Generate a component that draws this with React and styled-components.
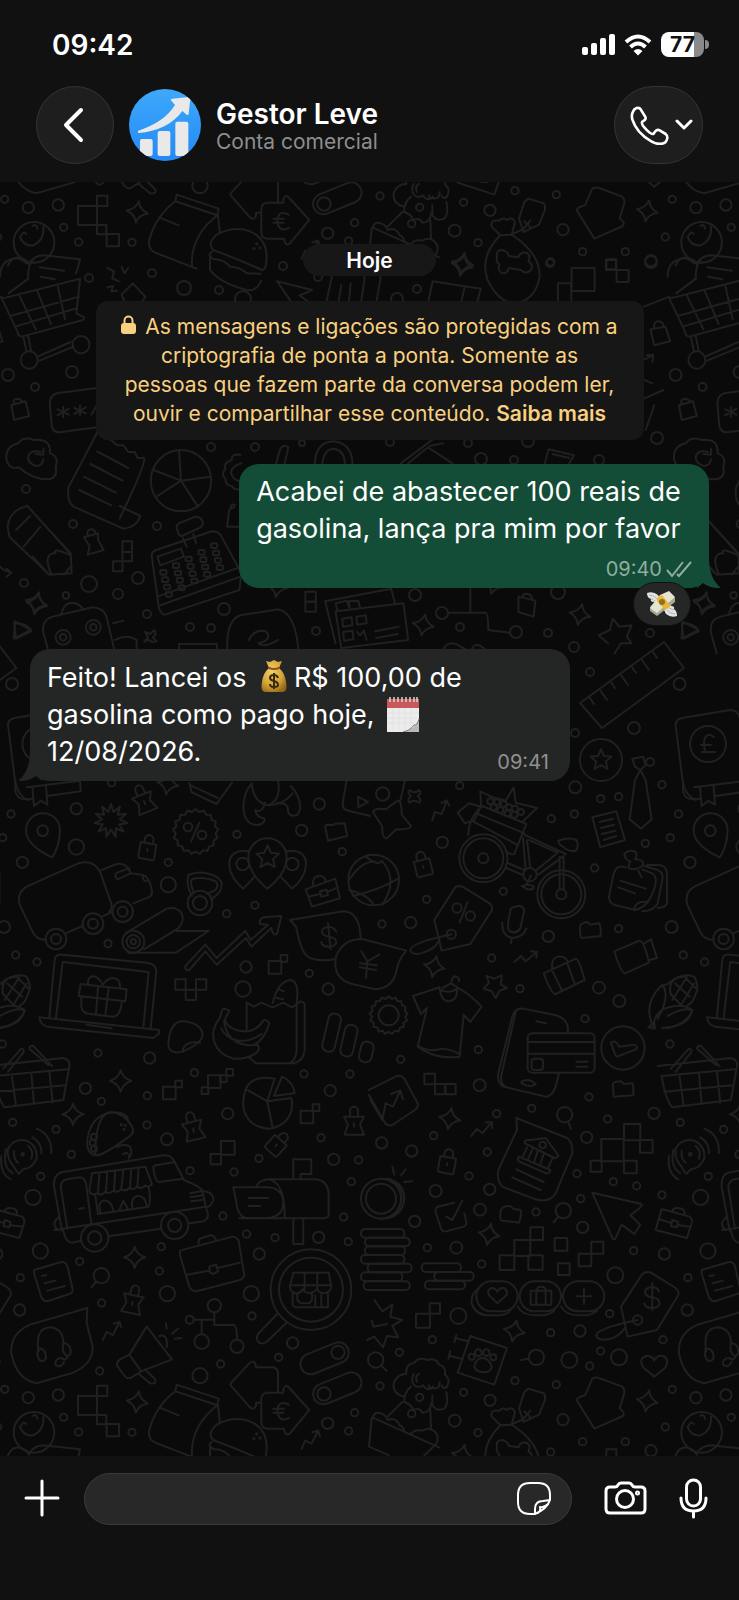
import React from "react";
import styled, { createGlobalStyle } from "styled-components";

const GlobalStyle = createGlobalStyle`
  * {
    box-sizing: border-box;
  }
  body {
    margin: 0;
    background: #0a0a0a;
    color: #fff;
    font-family: Inter, "Liberation Sans", sans-serif;
  }
  button {
    padding: 0;
    border: 0;
    background: none;
    color: inherit;
    font: inherit;
    cursor: pointer;
  }
`;

const Screen = styled.div`
  display: flex;
  flex-direction: column;
  min-height: 100vh;
  overflow: hidden;
`;

const Header = styled.header`
  background: #111;
  padding: 0 36px 18px;
`;

const StatusBar = styled.div`
  display: flex;
  align-items: center;
  justify-content: space-between;
  height: 86px;
  padding: 3px 0 0 16px;
`;

const Clock = styled.time`
  font-size: 28px;
  font-weight: 600;
`;

const StatusIcons = styled.div`
  display: flex;
  align-items: center;
  gap: 9px;
  margin-right: -6px;
`;

const Battery = styled.div`
  display: flex;
  align-items: center;
  gap: 1px;
  &::after {
    content: "";
    width: 4px;
    height: 9px;
    border-radius: 0 5px 5px 0;
    background: #8a8a8a;
  }
`;

const BatteryLevel = styled.span`
  width: 43px;
  height: 25px;
  border-radius: 8px;
  background: linear-gradient(90deg, #fff 77%, #8a8a8a 77%);
  color: #111;
  font-size: 21px;
  font-weight: 700;
  line-height: 25px;
  text-align: center;
`;

const ContactBar = styled.div`
  display: flex;
  align-items: center;
`;

const RoundButton = styled.button`
  display: flex;
  align-items: center;
  justify-content: center;
  gap: 6px;
  width: ${props => (props.$wide ? "89px" : "78px")};
  height: 78px;
  padding-left: ${props => (props.$wide ? "5px" : "0")};
  border: 1px solid #343434;
  border-radius: 39px;
  background: #1e1e1e;
`;

const Avatar = styled.svg`
  width: 72px;
  height: 72px;
  margin-left: 15px;
`;

const Contact = styled.div`
  flex: 1;
  margin-left: 15px;
  padding-top: 3px;
`;

const ContactName = styled.h1`
  margin: 0;
  font-size: 28px;
  font-weight: 600;
  line-height: 30px;
`;

const ContactKind = styled.p`
  margin: 0;
  color: #8e8e8e;
  font-size: 21px;
  line-height: 26px;
`;

const Chat = styled.main`
  position: relative;
  flex: 1;
  display: flex;
  flex-direction: column;
  align-items: center;
  padding: 62px 30px 0;
  background: #0a0a0a;
`;

const Wallpaper = styled.svg`
  position: absolute;
  inset: 0;
  width: 100%;
  height: 100%;
  fill: none;
  stroke: #202020;
  stroke-width: 2;
  stroke-linejoin: round;
  stroke-linecap: round;
  path,
  circle,
  rect,
  ellipse {
    vector-effect: non-scaling-stroke;
  }
`;

const DayLabel = styled.span`
  position: relative;
  padding: 1px 43px 0;
  border-radius: 16px;
  background: #171717;
  font-size: 21px;
  font-weight: 600;
  line-height: 31px;
`;

const Notice = styled.p`
  position: relative;
  max-width: 548px;
  margin: 25px 0 24px;
  padding: 11px 24px 12px;
  border-radius: 12px;
  background: #171717;
  color: #f9d07f;
  font-size: 21px;
  line-height: 29px;
  text-align: center;
  svg {
    margin-right: 3px;
  }
  a {
    color: inherit;
    font-weight: 600;
    text-decoration: none;
  }
`;

const Bubble = styled.article`
  position: relative;
  display: flex;
  flex-direction: ${props => (props.$sent ? "column" : "row")};
  align-items: ${props => (props.$sent ? "stretch" : "flex-end")};
  align-self: ${props => (props.$sent ? "flex-end" : "flex-start")};
  gap: ${props => (props.$sent ? "10px" : "0")};
  width: ${props => (props.$sent ? "69.2%" : "79.5%")};
  margin-bottom: 61px;
  padding: ${props => (props.$sent ? "9px 17px 7px" : "10px 21px 7px 17px")};
  border-radius: 20px;
  background: ${props => (props.$sent ? "#144d37" : "#242625")};
`;

const BubbleText = styled.p`
  flex: 1;
  margin: 0 0 ${props => (props.$sent ? "0" : "4px")};
  font-size: 27px;
  line-height: 37px;
`;

const Meta = styled.footer`
  display: flex;
  align-items: center;
  justify-content: flex-end;
  gap: 4px;
  color: ${props => (props.$sent ? "#8fae9f" : "#8f9190")};
  font-size: 20px;
  line-height: 24px;
`;

const Tail = styled.svg`
  position: absolute;
  bottom: 0;
  ${props => (props.$sent ? "right: -12px;" : "left: -12px;")}
  fill: ${props => (props.$sent ? "#144d37" : "#242625")};
`;

const Reaction = styled.button`
  position: absolute;
  right: 18px;
  bottom: -38px;
  display: flex;
  align-items: center;
  justify-content: center;
  width: 58px;
  height: 44px;
  border: 1px solid #111;
  border-radius: 22px;
  background: #252727;
`;

const Emoji = styled.svg`
  margin: 0 ${props => (props.$spaced ? "7px" : "4px")};
  vertical-align: ${props => (props.$spaced ? "-6px" : "-8px")};
`;

const Composer = styled.form`
  display: flex;
  align-items: flex-start;
  background: #111;
  padding: 17px 31px 75px 24px;
`;

const InputShell = styled.div`
  flex: 1;
  display: flex;
  align-items: center;
  min-width: 0;
  height: 52px;
  margin: 0 32px 0 24px;
  padding: 0 20px 0 24px;
  border: 1px solid #3a3a3a;
  border-radius: 26px;
  background: #282828;
`;

const MessageInput = styled.input`
  flex: 1;
  min-width: 0;
  border: 0;
  outline: 0;
  background: none;
  color: #fff;
  font: inherit;
  font-size: 27px;
`;

const IconButton = styled.button`
  display: flex;
  align-items: center;
  justify-content: center;
  height: 50px;
  & + & {
    margin-left: 32px;
  }
`;

const LineIcon = styled.svg`
  display: block;
  flex: none;
  fill: none;
  stroke: #fff;
  stroke-width: ${props => props.$weight || 3};
  stroke-linecap: round;
  stroke-linejoin: round;
`;

/* ---------- wallpaper ---------- */

const burst = (cx, cy, outer, inner, n) => {
  const points = [];
  for (let i = 0; i < n * 2; i++) {
    const r = i % 2 ? inner : outer;
    const a = (Math.PI * i) / n - Math.PI / 2;
    points.push(`${(cx + r * Math.cos(a)).toFixed(1)} ${(cy + r * Math.sin(a)).toFixed(1)}`);
  }
  return `M${points.join("L")}Z`;
};

const Dots = ({ at }) => at.map(([x, y, r = 11]) => <circle key={`${x}-${y}-${r}`} cx={x} cy={y} r={r} />);

const Pixels = ({ at }) =>
  at.map(([x, y, w, h = w]) => <rect key={`${x}-${y}`} x={x} y={y} width={w} height={h} />);

const Sparkles = ({ at }) =>
  at.map(([x, y, turn = 0]) => (
    <path
      key={`${x}-${y}`}
      transform={`translate(${x} ${y}) rotate(${turn})`}
      d="M0 -32Q6 -8 32 0Q6 8 0 32Q-6 8 -32 0Q-6 -8 0 -32Z"
    />
  ));

const Locks = ({ at }) =>
  at.map(([x, y, turn]) => (
    <path
      key={`${x}-${y}`}
      transform={`translate(${x} ${y}) rotate(${turn})`}
      d="M-24 -10H24V34Q24 38 18 38H-18Q-24 38 -24 32ZM-13 -10V-22A13 13 0 0 1 13 -22V-10M0 8V14"
    />
  ));

const Pushpins = ({ at }) =>
  at.map(([x, y, turn]) => (
    <path
      key={`${x}-${y}`}
      transform={`translate(${x} ${y}) rotate(${turn})`}
      d="M-28 44H30L18 14L30 -10H-30L-18 14ZM-12 -10V-28A12 12 0 0 1 12 -28V-10M0 10V20"
    />
  ));

const Trends = ({ at }) =>
  at.map(([x, y, turn]) => (
    <path
      key={`${x}-${y}`}
      transform={`translate(${x} ${y}) rotate(${turn})`}
      d="M-34 14L-14 -4L0 12L34 -16M16 -18L34 -16L32 2"
    />
  ));

const Lenses = ({ at }) =>
  at.map(([x, y, turn]) => (
    <g key={`${x}-${y}`} transform={`translate(${x} ${y}) rotate(${turn})`}>
      <circle r="23" />
      <path d="M0 23V46" />
    </g>
  ));

const MiddleLeft = () => (
  <g transform="translate(0 780) scale(.3333)">
    <Dots
      at={[
        [33, 102], [8, 173], [229, 86, 17], [229, 201, 23], [67, 247, 17], [12, 441, 18], [47, 525],
        [111, 546], [505, 247], [711, 163], [505, 314, 23], [958, 72, 17], [905, 151, 17], [1027, 215],
        [765, 376], [680, 401], [324, 491], [738, 561, 17], [729, 627, 23], [928, 580], [985, 627, 17],
        [7, 792], [294, 819], [449, 834, 17], [256, 925, 17], [304, 964], [442, 947], [583, 878],
        [912, 882], [1050, 882], [991, 932, 17], [683, 1001, 17], [128, 152, 16], [335, 8],
      ]}
    />
    <Sparkles at={[[504, 12, 10], [362, 903], [219, 1003]]} />
    <Locks at={[[444, 200, 10]]} />
    <Pushpins at={[[428, 54, -22], [577, 1036, -14], [1062, 1020, 0]]} />
    <Pixels
      at={[
        [806, 543, 38], [842, 525, 20], [526, 598, 31], [557, 629, 31], [588, 598, 31], [489, 920, 38],
        [526, 902, 20], [605, 922, 20], [624, 886, 38], [660, 886, 20], [679, 867, 20], [902, 992, 38],
        [938, 973, 20],
      ]}
    />
    {/* map pin, starburst, discount seal */}
    <path d="M156 232C120 215 78 190 78 150A51 50 0 0 1 180 150C180 180 170 215 156 232Z" />
    <path d={burst(333, 122, 50, 27, 11)} />
    <path d={burst(587, 155, 68, 60, 17)} />
    <path d="M598 128L573 185" />
    <Dots at={[[564, 141, 13], [606, 165, 13]]} />
    {/* book */}
    <path d="M46 0V30Q48 58 78 58L97 56M80 22L240 2L242 34L142 48M97 20L102 78L122 62L142 74L138 14" />
    <path d="M568 8L574 36L650 72L696 8M572 16L654 54" />
    {/* croissant */}
    <path d="M755 10C730 40 726 80 735 110C750 145 795 140 794 116C780 112 768 108 766 90C775 96 790 95 795 68M755 10Q760 68 805 76Q845 60 834 0M805 76Q850 75 878 40M830 70C850 68 866 70 864 95C870 112 896 112 900 88C904 60 885 30 872 18" />
    <path d="M1040 0L1028 70Q1028 90 1045 92L1110 108M1074 50L1104 66L1075 82Z" />
    <path d="M976 142Q975 134 984 134L1000 135L1006 131L1034 130L1042 168L984 182Z" />
    {/* location trio */}
    <path d="M802 326C770 300 745 270 745 232A57 57 0 0 1 860 232C860 270 835 300 802 326ZM748 215C710 205 686 225 688 255C690 285 710 310 730 326L762 292M858 215C896 205 920 225 918 255C916 285 896 310 876 326L844 292" />
    <path d={burst(803, 232, 36, 17, 5)} />
    <Dots at={[[728, 252, 19], [877, 252, 19]]} />
    {/* delivery truck */}
    <path d="M138 480Q110 480 98 456L60 376Q48 340 80 320L235 250Q280 238 300 275L334 370Q338 385 325 400M196 460L248 438M306 410L335 396M300 272L350 252Q380 246 392 280L352 298Q340 284 352 278L388 264M392 280L425 284Q448 286 456 335Q458 346 445 352L400 370M430 286Q424 300 440 304" />
    <Dots at={[[168, 477, 31], [168, 477, 15], [279, 431, 31], [279, 431, 15], [368, 395, 31], [368, 395, 15]]} />
    {/* kettlebell */}
    <path d="M576 348C562 325 560 300 566 285Q600 268 645 288Q670 300 664 325C658 345 640 350 634 360M582 340Q568 305 576 298Q610 288 648 305Q658 318 646 330L622 342" />
    <circle cx="600" cy="369" r="37" />
    <circle cx="600" cy="369" r="21" />
    {/* toolbox */}
    <path d="M917 328L1006 296L1020 355L936 380ZM925 350L960 342M984 335L1014 322M960 334L980 329L984 345L964 350ZM940 318Q935 290 958 288Q975 286 978 306" />
    {/* yoga mat */}
    <circle cx="400" cy="485" r="33" />
    <circle cx="400" cy="485" r="20" />
    <circle cx="400" cy="485" r="8" />
    <path d="M376 460L500 386Q530 378 545 400Q555 425 535 445L432 508M530 453H626L528 518H385" />
    {/* growth arrow */}
    <path d="M556 558L616 494L650 534L736 452L752 480L804 434L780 432Q776 418 790 412L844 408L832 460Q820 472 814 444L754 500L738 474L650 554L616 514L568 570Q554 574 556 558Z" />
    {/* coin bubbles */}
    <path d="M870 420L1030 394Q1080 395 1082 478M870 420L888 440Q900 500 914 520Q930 548 1004 538" />
    <path d="M1009 455Q1003 442 988 440Q964 442 966 458Q970 468 988 470Q1010 474 1009 488Q1004 500 988 500Q966 500 964 486M984 430L992 508" />
    <path d="M1219 512L1090 478Q1030 474 1008 530Q995 600 1065 614L1125 628Q1180 625 1190 570Q1195 540 1219 512ZM1084 514L1102 544L1138 524M1102 544L1098 594M1080 550L1130 556M1080 562L1128 570" />
    {/* laptop with a gift */}
    <path d="M148 712L164 540Q166 522 186 524L440 548Q468 550 469 575L452 745M168 714L188 546L446 576L430 742M118 712L478 750L476 762L460 774L142 740Q122 736 118 712ZM260 734L335 745" />
    <path d="M242 612L380 628L376 664L236 648ZM244 650V680Q246 700 270 702L340 710Q362 708 366 662M294 620L288 702M326 624L316 706M308 614C290 580 262 582 264 612M308 614C330 585 362 588 360 624" />
    {/* corn */}
    <path d="M0 745Q60 730 74 692Q50 678 0 708M10 645Q0 605 30 592Q60 580 80 590Q96 620 85 640Q75 670 60 676M8 640L40 675M22 610L66 650M50 590L88 628M40 675L80 610M14 660L58 592" />
    {/* sticker */}
    <path d="M548 815Q505 825 505 790Q510 722 552 724Q605 730 608 765Q606 790 548 815Q550 782 600 788" />
    {/* groceries */}
    <path d="M740 750V668L762 680L784 668L818 682L850 668L876 682L902 664L914 670V810Q910 845 880 850H768L746 832M890 676V810Q888 838 872 848M818 670C830 620 850 600 875 600Q898 608 890 668M836 628L852 634M830 654L850 658" />
    <path d="M666 690Q672 684 688 692L674 720C690 760 760 770 790 722Q800 716 808 730C800 760 782 785 768 790C800 815 740 840 700 836C640 820 622 760 660 714ZM672 722C680 790 730 800 772 794M664 745C680 780 730 800 785 762" />
    {/* bars */}
    <rect x="976" y="700" width="38" height="116" rx="17" transform="rotate(13 995 758)" />
    <rect x="1028" y="734" width="38" height="96" rx="17" transform="rotate(13 1047 782)" />
    <rect x="1080" y="785" width="38" height="62" rx="17" transform="rotate(13 1099 816)" />
    {/* basket */}
    <path d="M-30 858L190 834Q212 840 208 860L190 960L14 982Q-6 960 -18 888L202 868M36 890L48 978M94 880L102 972M148 874L158 968M-10 935L196 916M10 866L64 806Q74 806 70 818L24 876M156 858L100 798Q88 796 88 806L146 856" />
    {/* pie */}
    <path d="M824 896Q760 884 738 925C715 990 740 1040 805 1046C860 1040 884 1000 874 954L802 964ZM802 964L742 930M802 964L818 1044M846 890L822 948L884 940Q880 905 846 890Z" />
  </g>
);

const MiddleRight = () => (
  <g transform="translate(369 780) scale(.3333)">
    <Dots
      at={[
        [41, 42, 20], [272, 17], [619, 22, 18], [695, 56], [749, 50], [879, 14], [547, 116], [616, 102],
        [220, 187, 17], [829, 190], [677, 264], [173, 358], [403, 334], [39, 432], [125, 428, 17],
        [538, 469, 17], [749, 446], [368, 534], [453, 626], [690, 623, 18], [751, 663, 18], [648, 716],
        [95, 838], [328, 809], [332, 916, 18], [660, 951], [488, 985], [383, 1001], [716, 1017],
        [855, 1000, 17],
      ]}
    />
    <Sparkles at={[[196, 560, 12], [242, 1016, 10]]} />
    <Locks at={[[160, 250, -14]]} />
    <Trends at={[[212, 92, -30], [470, 532, 0]]} />
    <Lenses at={[[587, 1004, -25]]} />
    <Pixels at={[[166, 881, 32], [198, 912, 31], [229, 912, 31]]} />
    {/* star and flower */}
    <path d="M12 96Q18 82 50 88L86 62Q98 60 98 104L126 138Q122 150 82 148L52 176Q38 172 40 140ZM108 0L94 62" />
    <path d="M122 30Q136 44 150 30Q160 36 146 48Q160 62 150 68Q136 56 122 68Q112 60 126 48Q112 36 122 30Z" />
    {/* ball */}
    <circle cx="14" cy="300" r="76" />
    <path d="M-10 230Q30 260 38 242Q90 300 40 374M-60 300Q-20 240 20 246M-48 348Q30 330 88 296M-60 330Q0 345 14 376" />
    {/* bicycle */}
    <circle cx="343" cy="235" r="72" />
    <circle cx="343" cy="235" r="60" />
    <circle cx="343" cy="235" r="15" />
    <circle cx="577" cy="343" r="72" />
    <circle cx="577" cy="343" r="60" />
    <circle cx="577" cy="343" r="15" />
    <circle cx="483" cy="284" r="20" />
    <path d="M462 174L470 268M474 180L484 264M466 164L590 222M480 180L566 218L500 272M584 228L508 284M572 230V328M584 230V328M414 248L466 270M412 264L464 286M568 182Q600 170 622 180Q632 200 620 212Q596 216 582 200Q570 196 568 182M462 318Q480 310 494 320Q496 330 476 328L458 318M486 286L474 312" />
    <path d="M298 164Q300 110 340 78L472 132L436 222Q430 226 412 216M266 98L300 70L336 80L316 120L288 130ZM336 76L334 34L372 52L410 62L434 22L440 68L504 84L462 124M322 100L466 160M312 124L444 194" />
    <Dots at={[[364, 64, 9], [384, 66, 9], [374, 82, 9], [404, 72, 9], [394, 90, 9], [420, 82, 9], [416, 100, 9], [438, 86, 9], [436, 104, 9], [456, 96, 9]]} />
    {/* tags and microphone */}
    <path d="M260 320Q272 316 284 322L362 370Q372 380 368 392L304 492L218 512L196 420ZM296 366L272 428M248 463Q120 490 124 512Q135 530 170 515Q200 505 212 478" />
    <Dots at={[[264, 384, 14], [304, 408, 14], [247, 463, 14]]} />
    <path d="M426 385Q460 368 466 392L454 445Q440 465 420 452Q412 440 426 385ZM400 428Q398 470 432 474Q464 470 472 446M428 474L426 490" />
    {/* notes, tie, sticky notes */}
    <path d="M670 112L742 94L768 180L694 202ZM692 126L732 116M696 144L736 134M698 162L740 152M704 180L742 168M798 0L782 118L816 146L848 118L830 0M798 -40L790 -64L822 -70L830 -44L814 -30ZM798 0L814 -30L830 0" />
    <path d="M770 262Q740 250 732 290L720 350Q720 370 740 376L800 390Q840 380 858 320Q866 290 850 280L820 268M754 302L830 326M748 322L798 340M796 388Q800 360 838 366M826 258L866 270Q884 276 880 300L866 370Q856 392 820 394M834 254L878 256Q896 262 894 290V370Q890 382 866 384M766 222Q780 206 800 216Q806 226 798 238Q830 240 820 258Q790 276 778 262Q780 250 784 244Q768 240 766 222M808 272L818 292" />
    {/* folders, suitcase, camera */}
    <path d="M634 436Q640 428 656 426L664 434L690 430Q696 436 695 468L638 474Q632 470 634 436ZM732 912Q736 904 756 904L764 912L790 910Q794 914 793 946L734 950Z" />
    <path d="M524 580L620 536Q630 536 647 600L560 642Q548 644 524 580ZM548 568L578 630M594 548L618 614M550 566Q545 536 566 530Q590 526 596 546M736 514L812 482Q826 484 840 548L768 580Q756 580 736 514ZM826 490L846 478L864 534L842 540" />
    {/* small star, gear */}
    <path d="M352 588L376 596L398 586L396 614L414 624L392 632L380 654L368 634L344 626L360 608Z" />
    <path d={burst(59, 706, 57, 50, 17)} />
    <circle cx="59" cy="706" r="30" />
    {/* t-shirt */}
    <path d="M212 622L132 648L156 702L174 684L146 800Q200 840 272 830L284 704L304 726L338 680Q300 640 264 622M212 622Q215 664 240 664Q268 660 264 622M212 628Q240 644 264 626M148 798Q180 818 220 806Q250 808 274 824M246 610Q250 585 262 590Q272 594 270 604M222 624L246 610L262 620" />
    {/* phone and card */}
    <path d="M596 756Q602 718 560 706L464 686Q436 684 430 710L388 880Q384 910 404 920L530 950Q550 950 560 920L570 880M448 688Q440 690 436 714L396 890Q396 910 408 920M502 724L530 730M458 905Q480 892 500 912Q485 925 458 910Z" />
    <rect x="476" y="760" width="201" height="118" rx="14" />
    <path d="M478 786H675M478 821H675M622 845H656M622 860H656" />
    <rect x="488" y="836" width="34" height="34" rx="8" />
    {/* approved */}
    <circle cx="762" cy="804" r="65" />
    <path d="M726 788Q740 778 750 800L794 794Q808 798 802 808L744 830Q738 828 726 788Z" />
    {/* corn husk */}
    <path d="M852 738Q820 670 880 614Q905 650 866 716M852 738Q860 690 900 682Q940 670 970 690Q960 740 880 744M838 742L856 726L858 746Z" />
    <path d="M884 616L900 610Q920 590 944 590" />
    {/* chart card */}
    <path d="M0 930L84 888Q96 884 106 896L146 970Q150 980 138 990L70 1035Q56 1040 48 1028L0 945M4 960L40 1020L50 970L72 980L94 932M66 942L94 932L102 958" />
  </g>
);

const LowerLeft = () => (
  <g transform="translate(0 1110) scale(.3333)">
    <Dots
      at={[
        [38, 37], [168, 58], [214, 133], [122, 199], [99, 262, 23], [441, 45], [501, 88, 18], [570, 182],
        [777, 145], [702, 186], [963, 83], [1001, 148, 17], [1076, 150], [1054, 215], [1031, 321],
        [669, 318], [740, 372], [825, 383], [956, 382, 17], [1045, 395], [778, 432, 17], [121, 423, 23],
        [239, 454], [484, 410], [478, 483], [502, 551, 23], [61, 503], [59, 600, 17], [305, 579],
        [754, 551, 23], [756, 618], [662, 762], [600, 797, 23], [878, 699, 17], [836, 742], [299, 783],
        [14, 838], [85, 863, 17], [175, 855, 17], [191, 922], [236, 966], [396, 967], [983, 940, 17],
        [1064, 908], [1046, 963],
      ]}
    />
    <Sparkles at={[[404, 442], [412, 876, 8]]} />
    <Pushpins at={[[400, 566, 12]]} />
    <Locks at={[[836, 98, 42]]} />
    <Trends at={[[334, 664, -24], [930, 990, -24]]} />
    <Lenses at={[[304, 497, 40]]} />
    <Pixels
      at={[
        [663, 93, 41], [632, 132, 31], [234, 858, 57], [291, 827, 31], [291, 915, 28], [320, 942, 37],
      ]}
    />
    {/* live speech bubble */}
    <path d="M40 168Q16 140 26 112Q46 84 80 92Q114 108 110 146Q96 176 70 178L56 192ZM84 108Q102 122 94 146M42 122Q40 148 54 158M98 82Q126 98 124 130M110 56Q156 74 154 130M18 118Q6 170 38 190M4 138Q-2 190 32 208" />
    <circle cx="68" cy="133" r="4" />
    {/* taco */}
    <path d="M286 136Q310 138 392 76Q404 66 396 50Q376 10 330 6Q286 16 286 136ZM286 136Q258 130 262 90Q268 40 300 20Q320 4 360 8Q380 14 384 26M352 112Q370 98 390 110Q400 130 386 146M370 132Q386 124 388 140" />
    <Dots at={[[364, 44, 2], [376, 46, 2], [372, 58, 2], [282, 80, 9], [278, 98, 9], [282, 116, 9]]} />
    {/* food truck */}
    <path d="M186 362L162 230Q160 190 190 186L490 136Q516 134 526 160L552 210Q600 230 606 240L620 300Q632 324 610 334L570 340M190 362Q196 398 216 398L244 392M330 378L484 356M164 360L618 290M612 244Q640 246 640 270Q634 290 618 292M176 322Q150 345 176 360M202 356L182 230Q184 212 200 208L240 202Q254 204 258 220L274 340M238 296L252 294M460 176Q458 168 468 166L524 156L550 206L476 216Q466 216 460 176M570 250L602 244M572 262L606 256M574 274L606 270" />
    <path d="M276 190L436 170L456 222Q444 236 436 226Q426 240 412 230Q402 242 388 234Q378 246 364 238Q352 250 340 242Q328 254 316 246Q304 258 292 250Q272 258 268 242ZM298 190L294 248M322 186L318 244M346 182L342 240M370 180L364 236M394 176L390 232M416 172L412 230M286 256L294 312L446 290Q454 270 446 232M302 308Q290 280 310 272Q335 270 340 304M398 296Q390 264 412 258Q436 256 440 288M358 300L370 272L384 298" />
    <Dots at={[[284, 384, 41], [284, 384, 20], [524, 346, 41], [524, 346, 20]]} />
    {/* mailbox */}
    <path d="M700 232H800Q846 232 850 276Q850 322 800 324H740Q712 320 708 270ZM770 228Q780 208 810 208H950Q984 214 986 250V315Q984 324 970 325H718M808 208Q856 220 854 325M746 264H804M746 288H780M880 328V402H910V328M880 206V148H934V192H902V206" />
    {/* toolbox */}
    <path d="M-20 305Q-22 298 -14 298L66 320Q76 326 72 340L58 384L-36 360ZM-26 328L8 338M34 346L68 350M14 330L32 336L28 352L10 348ZM14 302Q20 290 42 296Q54 302 50 314" />
    {/* note, briefcase */}
    <path d="M102 480L184 456Q196 454 202 468L218 538Q220 548 208 552L142 574Q130 574 124 562L102 490ZM126 498L138 496M134 520L166 512M142 542L194 528" />
    <path d="M540 422L698 380Q710 380 716 392L732 490Q734 504 720 510L590 544Q574 544 568 530L540 436ZM560 494L628 482M652 474L720 458M628 470L648 464L654 484L640 492L630 488ZM596 400Q594 386 606 384L630 376Q644 376 648 390" />
    {/* support bubble */}
    <path d="M262 594L90 644Q30 670 34 730Q50 810 110 820L220 788Q280 760 278 710L260 640ZM116 724Q104 655 150 652Q190 656 190 700M190 700Q214 700 212 730Q200 750 188 720ZM114 716Q138 714 138 745Q122 766 112 736ZM206 736Q196 756 186 744Q164 744 166 764Q184 776 192 756" />
    {/* megaphone */}
    <path d="M440 650L516 748L424 784L392 804Q382 808 374 798L352 768Q348 756 360 748L388 734ZM388 734L424 784M414 790L450 820Q470 824 466 808L434 778M478 678Q505 670 500 712M498 640L500 656M516 672L534 656M524 686L544 684" />
    {/* network */}
    <Dots at={[[643, 587, 20], [569, 629, 12], [605, 695, 22], [711, 709, 20]]} />
    <path d="M582 629H643M643 608V645H700Q711 645 711 688M605 632V672" />
    {/* shop lens */}
    <circle cx="933" cy="539" r="121" />
    <circle cx="933" cy="539" r="96" />
    <path d="M832 612L774 672Q766 690 778 698Q790 704 802 694L860 638M880 488H986L994 530Q990 548 972 550Q956 550 952 536Q940 552 922 548Q912 546 910 536Q900 552 886 550Q870 546 870 528ZM870 526H994M914 490V536M952 490V536M878 552V586L886 592H984V550M892 554V570L902 580H928L936 570V552M946 556V592M964 556V592" />
    {/* sliders */}
    <rect x="898" y="714" width="152" height="62" rx="31" transform="rotate(-22 974 745)" />
    <circle cx="1014" cy="727" r="20" />
    <rect x="936" y="804" width="152" height="62" rx="31" transform="rotate(-22 1012 835)" />
    <circle cx="972" cy="852" r="20" />
    {/* exchange arrows */}
    <path d="M784 878H768V888Q760 902 750 892L692 826Q690 822 694 818L750 758Q766 748 768 772H820Q834 776 834 790V846M784 866Q786 850 800 848H850V838Q858 820 868 834L928 900L870 970Q856 982 852 956H800Q786 954 784 938ZM866 884Q836 868 832 902Q836 940 868 924M820 896H852M820 908H850" />
    {/* takeaway bag and burger */}
    <path d="M530 824L656 866L652 886L526 844ZM526 844Q466 890 448 960Q442 990 470 1000L590 1046M652 886Q570 950 576 1040M654 886L660 940M478 892L536 916" />
    <path d="M640 990Q620 970 650 944Q700 916 750 934Q810 960 798 1034Q796 1050 786 1050Q720 1020 640 990ZM636 996Q620 1004 640 1018Q670 1016 690 1040Q720 1040 740 1060Q770 1060 782 1062M630 1012V1050Q660 1090 740 1110Q770 1115 784 1082" />
    <Dots at={[[770, 972, 2], [762, 986, 2], [780, 984, 2]]} />
    {/* ice cream */}
    <circle cx="102" cy="967" r="61" />
    <path d="M60 950Q70 980 100 976Q134 960 130 920M64 946Q70 932 78 942M98 918Q110 910 112 926M88 1030Q100 1008 130 1006L240 1018Q236 1040 228 1060M24 1036Q40 1000 76 1020L88 1034" />
  </g>
);

const LowerRight = () => (
  <g transform="translate(369 1110) scale(.3333)">
    <Dots
      at={[
        [38, 99, 17], [128, 123, 17], [194, 77], [355, 126], [300, 198], [200, 243, 18], [362, 238, 17],
        [137, 334, 17], [333, 299, 18], [501, 306], [653, 82, 17], [624, 191], [733, 215], [803, 228],
        [635, 266], [641, 352, 17], [879, 255], [794, 422], [886, 432, 17], [175, 413], [262, 413, 18],
        [338, 462], [268, 618, 24], [190, 689], [91, 727], [33, 828], [739, 496, 24], [722, 611],
        [633, 663, 17], [545, 668], [695, 723], [662, 768], [601, 750, 24], [750, 742, 24], [882, 689],
        [438, 812], [562, 824], [284, 847], [363, 871, 17], [257, 932, 18], [327, 968], [582, 929, 17],
        [641, 995], [769, 995], [545, 1026], [846, 1022, 17], [889, 951],
      ]}
    />
    <Sparkles at={[[360, 373, 10], [436, 663, 12], [835, 873, 10], [280, 1036, 12]]} />
    <Locks at={[[236, 152, 10]]} />
    <Trends at={[[338, 58, -10]]} />
    <Lenses at={[[583, 302, 40], [502, 742, 80], [20, 750, -45]]} />
    <Pixels
      at={[
        [697, 87, 67], [765, 42, 49], [813, 90, 38], [665, 152, 33], [765, 152, 38], [436, 390, 48],
        [484, 352, 38], [392, 436, 44], [478, 436, 43], [557, 384, 38], [567, 460, 35], [667, 395, 36],
        [629, 431, 38], [141, 611, 42], [182, 580, 31], [712, 1018, 30],
      ]}
    />
    {/* bank statement */}
    <path d="M442 24L594 84Q612 96 610 130L560 250Q540 280 500 268L400 230Q382 210 388 180L444 60ZM468 100Q464 88 486 90L530 84L568 136Q566 144 556 144ZM450 140L544 180Q544 192 532 190L450 154Q444 148 450 140M474 112L462 138M490 118L478 146M506 124L496 154M524 132L514 162M550 146L538 172M442 178L524 216M430 202L514 240" />
    <circle cx="521" cy="105" r="10" />
    {/* coin stack */}
    <circle cx="36" cy="266" r="60" />
    <circle cx="36" cy="266" r="45" />
    <path d="M36 206Q104 206 106 266Q100 326 36 326M60 206Q96 220 98 266Q92 310 60 324M70 170L76 194M110 178L96 196M106 216L130 214" />
    {[
      [-24, 357, 130], [-12, 383, 134], [-12, 409, 120], [-24, 435, 130], [-4, 461, 132], [-24, 487, 124],
      [-16, 514, 138], [158, 460, 118], [196, 486, 118], [168, 512, 120],
    ].map(([x, y, w]) => (
      <rect key={`${x}-${y}`} x={x} y={y} width={w} height="26" rx="12" />
    ))}
    {/* check box, folder, cursor, toolbox */}
    <path d="M256 278L206 290Q198 296 200 306L216 356Q222 366 232 364L284 350Q294 346 292 336L286 310M232 320L250 330L280 272M396 300Q402 286 424 288L432 296L454 300Q460 306 450 338L400 332Q390 330 396 300Z" />
    <path d="M670 248L818 282Q824 288 784 316L814 344L796 372L758 344L738 388H732Z" />
    {/* burst */}
    <path d="M16 570L40 604L70 584L64 620L100 630L70 648L88 682L54 678L42 712L16 680L-6 690M8 632L14 650L54 642" />
    {/* quick actions */}
    <rect x="322" y="514" width="124" height="90" rx="45" />
    <rect x="452" y="514" width="124" height="90" rx="45" />
    <rect x="582" y="514" width="124" height="90" rx="45" />
    <path d="M328 536Q306 550 308 580Q320 616 360 616H390Q410 616 424 602M446 590Q460 616 500 616H520Q544 614 556 602M576 590Q590 616 630 616H650Q670 614 684 602M385 580L360 556Q352 540 368 534Q380 534 385 546Q392 532 404 534Q418 540 412 556ZM485 542H547V584H485ZM502 542V584M530 542V584M504 540Q504 530 516 530Q530 530 530 540M622 559H668M645 536V582" />
    {/* price tag */}
    <path d="M820 492Q832 482 846 488L920 534Q932 544 928 556L864 660L776 680L756 590ZM806 630Q684 655 682 676Q688 694 720 688Q750 680 768 654M870 545Q866 532 850 532Q828 532 828 548Q832 560 850 562Q872 566 872 580Q868 594 850 594Q828 594 826 580M850 520V600" />
    <circle cx="806" cy="630" r="14" />
    {/* pet shop sign */}
    <path d="M304 678L414 714L376 824L266 788ZM262 676L256 696M258 684L296 694M244 724L238 746M242 738L276 746M316 770Q320 744 340 744Q362 746 368 770Q364 790 342 786Q322 786 316 770Z" />
    <Dots at={[[308, 740, 9], [328, 728, 10], [352, 728, 10], [373, 742, 9]]} />
    {/* heart */}
    <path d="M856 800L822 772Q808 744 832 738Q850 736 856 752Q864 734 882 738Q904 748 888 774Z" />
    {/* poodle */}
    <path d="M104 860Q70 850 74 820Q84 792 112 792Q108 764 136 758Q150 740 176 750Q200 742 210 764Q232 770 228 794Q246 806 234 830Q222 840 218 826M134 792Q124 812 136 826Q150 836 162 826Q172 844 190 834Q212 840 212 816M126 830Q104 848 106 876Q128 884 132 900Q152 892 160 908Q184 908 186 880M190 856V884Q200 906 226 896Q240 880 232 846M100 876L56 920M184 900L186 956M150 792Q136 800 144 816M180 826Q180 840 192 830" />
    <circle cx="152" cy="862" r="11" />
    <circle cx="128" cy="911" r="11" />
    <path d="M10 922L210 1012M8 926L0 1010L60 1036M12 920Q20 900 44 914Q54 920 56 930Q80 920 92 946Q104 950 106 966M124 974Q136 956 160 962Q180 950 196 964Q214 980 200 1004M166 1036L200 1004" />
    {/* treat bag and tag */}
    <path d="M394 946L368 920Q362 898 392 902Q400 890 414 900Q430 888 438 906L428 944ZM394 946Q330 1010 356 1080Q390 1150 440 1150Q500 1140 512 1070Q514 1000 428 944" />
    <path d="M384 1010Q380 990 400 990Q416 994 420 1008L448 1012Q456 992 476 1000Q486 1010 478 1024Q496 1034 484 1052Q470 1064 456 1050L420 1044Q412 1066 396 1058Q384 1046 392 1034Q380 1026 384 1010Z" />
    <path d="M478 836L524 850Q530 856 528 870L510 914L464 936L450 896L466 846ZM484 902L462 928L430 942M466 904L484 922" />
    {/* house */}
    <path d="M670 806Q680 800 690 804L760 830Q768 838 766 850L752 896Q770 906 762 918L676 956L624 872Q622 862 648 856Z" />
  </g>
);

const Top = () => (
  <g>
    <g transform="translate(0 180) scale(.4713 .3333)">
      {/* shopping cart */}
      <path d="M4 356L170 296L162 400L172 408Q184 412 176 420L46 470Q36 466 38 458ZM40 344L76 448M78 330L108 432M122 314L138 418M22 408L168 350M32 440L164 384M50 474L56 514M60 470L66 514M80 530L150 486M84 542L156 500M60 296Q58 260 70 240M60 296L18 340M-50 380L4 350M84 262L136 272M86 290L116 298M56 250Q40 226 20 240Q0 250 0 290" />
      <ellipse cx="62" cy="540" rx="18" ry="26" />
      <ellipse cx="172" cy="494" rx="18" ry="26" />
      {/* plug */}
      <path d="M228 264L242 274L238 294L252 304M258 260L264 280L272 264M228 322L240 318L236 334L248 332M282 310L308 350L300 370M282 310L258 344L266 370" />
      {/* plane, fries, cup */}
      <path d="M588 304L662 330L636 346L658 370M588 304L620 370M704 290L692 370M724 316L718 370M744 310L740 370M774 290L766 370M808 290L798 370M918 304L1020 326L1012 370M918 304L908 370M986 320L978 370" />
      {/* locks and code bubble */}
      <path d="M1380 448L1412 440L1422 484L1388 496ZM1388 444Q1386 424 1398 424Q1408 426 1408 440M24 676L54 664L62 708L30 720ZM30 672Q26 656 38 656Q46 658 48 666" />
      <path d="M206 624L120 640Q104 648 106 676L110 740Q114 760 130 756L206 742M134 680V712M122 688L146 704M146 686L122 706M170 676V706M158 684L182 700M182 682L158 702M206 674L194 704" />
      <path d="M1366 540L1384 526M1372 526L1386 524L1384 546M1368 600L1384 610M1366 656L1408 630M1388 676L1370 750" />
    </g>
    <g transform="translate(0 410) scale(.4713 .3333)">
      {/* cloud */}
      <path d="M72 90Q50 78 38 100Q10 110 14 150Q20 180 40 172Q70 210 104 208Q124 200 118 170Q126 140 106 130Q108 84 72 90ZM92 148Q90 168 76 168Q58 160 60 138Q66 118 86 126M76 132L92 134L92 116" />
      {/* receipt */}
      <path d="M206 68L146 230Q140 270 156 290L262 356Q290 352 298 318L254 288M206 68L222 84L236 90L248 106L262 106L272 126L286 126L292 144L306 144Q310 160 254 326M206 124L272 174M192 162L260 212M178 200L246 248M168 240L236 286" />
      {/* pie */}
      <ellipse cx="384" cy="212" rx="64" ry="92" />
      <path d="M384 212L380 122M384 212L446 200M384 212L420 290M384 212L334 258M384 212L326 180" />
      {/* pencil */}
      <path d="M16 350Q20 300 58 288L150 430L152 490L104 494L20 380ZM58 288L150 432M34 360L64 318M50 410L86 350M104 494L70 440M108 490Q90 430 118 430Q110 410 150 436M136 494L152 466" />
      <path d="M0 470L8 480L24 488M14 476L24 488L14 500" />
      {/* gear, screwdriver, magnifier, triangle */}
      <path d="M510 134Q490 130 492 150Q474 156 478 178Q468 192 478 206Q478 226 492 228Q496 240 510 238M512 160Q492 168 490 188Q494 208 508 214M586 160L594 120Q600 100 612 112L604 160M668 160Q670 96 708 94Q746 100 748 160M684 160Q688 116 708 116Q730 120 732 160M850 160L930 76M866 160L908 112L960 160M912 108L940 100M1156 160L1164 118L1218 136L1208 160M1172 132L1208 144" />
      {/* cash register */}
      <path d="M322 440Q320 424 336 418L450 364Q464 364 470 380L512 490L508 540L350 614Q336 612 334 560ZM334 560L512 470M340 586L510 500M334 440L384 416L390 440L340 466ZM388 384L396 410M410 372L416 400M378 364Q370 348 380 340L414 320Q426 320 430 334Q432 350 420 356L386 378Q376 376 378 364" />
      {[0, 1, 2, 3].map(row =>
        [0, 1, 2, 3, 4].map(col => (
          <rect
            key={`${row}-${col}`}
            x={340 + col * 27 + row * 4}
            y={480 - col * 20 + row * 22}
            width="13"
            height="14"
            rx="4"
          />
        ))
      )}
      {/* pushpin, pixels */}
      <path d="M178 382L208 370L208 390L220 420L186 434L190 408ZM186 376Q184 358 194 358Q202 360 202 370M498 290L486 300L482 350L506 350M490 296Q488 282 498 284" />
      <rect x="260" y="394" width="20" height="32" />
      <rect x="260" y="426" width="20" height="28" />
      <rect x="240" y="454" width="20" height="30" />
      <rect x="648" y="545" width="22" height="30" />
      <rect x="648" y="575" width="22" height="30" />
      {/* robot */}
      <path d="M92 668Q88 630 112 620L196 592Q220 594 226 620L246 740M92 668L104 730M130 614Q134 580 152 578Q172 580 176 600M240 640L262 632M244 690Q270 670 290 690L290 740M30 640L34 686L66 664Q60 640 30 640Z" />
      <ellipse cx="198" cy="652" rx="16" ry="22" />
      <ellipse cx="198" cy="652" rx="7" ry="10" />
      <ellipse cx="134" cy="682" rx="16" ry="22" />
      <ellipse cx="134" cy="682" rx="7" ry="10" />
      <ellipse cx="140" cy="556" rx="7" ry="10" />
      <path d="M308 666L318 672L328 660L330 674L324 682L332 694L322 696L314 688L306 696L314 682Z" />
      {/* chat question, documents */}
      <path d="M482 720Q480 630 510 616L590 598Q630 610 634 740M528 690Q540 656 564 664Q580 690 548 700Q560 716 590 690M380 720V702H460V720" />
      <path d="M712 604L856 580L866 690L724 714ZM690 574L712 700M690 574L830 536L838 580M716 600L712 580L736 572L742 596M742 590L740 574L760 572L764 592M726 626L746 622L748 646L728 650ZM756 620L776 616L778 640L758 644ZM728 666L748 662L750 688L730 692ZM758 666L764 676L772 662L778 690M796 664L846 650M798 684L844 672" />
      {/* circuit */}
      <path d="M952 608H1030Q1036 610 1036 660L1082 668M998 606V536M1100 560L1136 572L1132 620L1100 606ZM1110 562Q1108 548 1120 552Q1130 556 1128 568" />
      <path d="M1300 626L1314 650L1340 646L1330 680L1340 700L1318 700L1304 730M1300 626L1294 660L1270 676L1290 700M1448 634L1446 686L1482 660Z" />
      {/* flower behind the reply */}
      <path d="M940 720Q950 690 970 704L990 720M1000 720Q1010 690 1030 720" />
    </g>
    <g transform="scale(.3333)">
      <Sparkles at={[[1388, 790, 10], [110, 1812, 12], [832, 1760, 8], [1270, 1875, 10], [1740, 1844, 12], [1484, 1752, 20], [2112, 1808, 14]]} />
      <Pixels at={[[1715, 804, 69], [1674, 850, 40, 60], [1818, 780, 30], [1850, 810, 36]]} />
    </g>
    <Dots
      at={[
        [89, 278, 4], [152, 273, 4], [184, 288, 7], [219, 290, 4], [283, 266, 4], [243, 299, 8],
        [318, 277, 4], [397, 299, 6], [417, 289, 4], [550, 263, 4], [651, 262, 6], [8, 375, 6],
        [72, 372, 6], [35, 387, 4], [26, 489, 4], [211, 447, 4], [255, 447, 4], [302, 443, 3],
        [390, 442, 4], [468, 443, 4], [528, 441, 6], [481, 459, 6], [657, 438, 6], [514, 460, 4],
        [599, 460, 5], [73, 524, 4], [157, 526, 4], [89, 584, 8], [24, 583, 4], [138, 578, 6],
        [118, 594, 5], [224, 609, 6], [147, 614, 4], [190, 627, 4], [211, 628, 4], [415, 595, 6],
        [558, 592, 7], [548, 633, 4], [316, 631, 4], [460, 627, 4], [650, 633, 4], [442, 613, 6],
        [516, 632, 6], [574, 647, 5], [590, 672, 4], [575, 733, 4], [634, 728, 6], [650, 762, 4],
        [12, 684, 6],
      ]}
    />
    {/* ruler, star coin, pound tablet */}
    <path d="M580 703L664 642L684 668L602 728ZM590 698L594 704M600 690L607 700M611 682L615 688M621 675L628 685M632 667L636 673M642 660L649 670M653 652L657 658" />
    <circle cx="601" cy="760" r="21" />
    <path d={burst(601, 760, 11, 5, 5)} />
    <path d="M676 728Q674 720 682 718L730 710Q738 710 740 718L746 770M676 728L682 776Q684 796 696 800" />
    <circle cx="708" cy="744" r="18" />
    <path d="M714 737Q708 732 705 738Q703 742 705 752H702H715M701 745H711" />
  </g>
);

const TILE_WIDTH = 667.6;
const TILE_HEIGHT = 1190;

const ChatWallpaper = () => (
  <Wallpaper aria-hidden="true">
    <defs>
      <g id="doodles">
        <MiddleLeft />
        <MiddleRight />
        <LowerLeft />
        <LowerRight />
        <Top />
      </g>
    </defs>
    <g transform="translate(0 -182)">
      {[-1, 0, 1].map(col =>
        [-1, 0].map(row => (
          <use key={`${col}${row}`} href="#doodles" x={col * TILE_WIDTH} y={row * TILE_HEIGHT} />
        ))
      )}
    </g>
  </Wallpaper>
);

/* ---------- icons ---------- */

const SignalIcon = () => (
  <svg width="33" height="21" fill="#fff" aria-hidden="true">
    <rect x="0" y="13" width="6" height="8" rx="2" />
    <rect x="9" y="9" width="6" height="12" rx="2" />
    <rect x="18" y="4" width="6" height="17" rx="2" />
    <rect x="27" y="0" width="6" height="21" rx="2" />
  </svg>
);

const WifiIcon = () => (
  <svg width="28" height="22" viewBox="0 0 28 22" aria-hidden="true">
    <path d="M2 8Q14 -3 26 8" fill="none" stroke="#fff" strokeWidth="4" />
    <path d="M6.500 13Q14 6 21.500 13" fill="none" stroke="#fff" strokeWidth="4" />
    <path d="M9.500 17Q14 13 18.500 17L14 21.500Z" fill="#fff" />
  </svg>
);

const GrowthLogo = () => (
  <Avatar viewBox="0 0 216 216" role="img" aria-label="Gestor Leve">
    <defs>
      <linearGradient id="sky" x1="0" y1="0" x2="0" y2="1">
        <stop offset="0" stopColor="#3ea9fb" />
        <stop offset="1" stopColor="#2389f6" />
      </linearGradient>
      <clipPath id="disc">
        <circle cx="108" cy="108" r="108" />
      </clipPath>
    </defs>
    <g clipPath="url(#disc)">
      <rect width="216" height="216" fill="url(#sky)" />
      <g fill="#e9e9e9">
        <rect x="33" y="150" width="38" height="51" rx="6" />
        <rect x="86" y="126" width="38" height="75" rx="6" />
        <rect x="139" y="98" width="39" height="103" rx="6" />
        <path d="M28 125C78 108 116 84 138 48L126 34Q124 30 130 29L179 24Q185 24 184 30L179 74Q177 80 173 77L160 66C132 106 82 128 30 132Q24 130 28 125Z" />
      </g>
    </g>
  </Avatar>
);

const MoneyWings = () => (
  <Emoji width="32" height="28" viewBox="0 0 32 28" role="img" aria-label="dinheiro com asas">
    <path d="M1 3Q7 1 12 5L15 11L11 15Q7 14 8 12Q4 12 5 9Q1 8 1 3Z" fill="#e2e4e3" />
    <path d="M31 26Q25 28 20 24L17 18L21 13Q26 14 25 16Q29 16 28 19Q31 21 31 26Z" fill="#e2e4e3" />
    <path d="M15 5L23 2L29 8L29 12L11 26L4 21L4 17Z" fill="#a9a892" />
    <path d="M14 5L23 1L29 7L11 23L4 18Z" fill="#e6e3cf" />
    <path d="M11 8L16 5L23 14L24 17L19 20L11 11Z" fill="#eab638" />
    <circle cx="16" cy="12" r="3" fill="#8b712b" />
    <path d="M3 5Q8 5 11 9M4 8L9 11M29 24Q24 24 21 20M28 20L23 18" stroke="#aeb5b4" fill="none" />
  </Emoji>
);

const MoneyBag = () => (
  <Emoji $spaced width="26" height="34" viewBox="1 0 26 34" role="img" aria-label="saco de dinheiro">
    <defs>
      <radialGradient id="sack" cx=".4" cy=".35" r=".75">
        <stop offset="0" stopColor="#f4d06a" />
        <stop offset=".6" stopColor="#d3a235" />
        <stop offset="1" stopColor="#8d6415" />
      </radialGradient>
    </defs>
    <path d="M6 2L10 3L14 1L18 3L22 2L19 9Q25 14 26 23Q28 33 22 33H6Q0 33 2 23Q3 14 9 9Z" fill="url(#sack)" />
    <path d="M9 9Q14 11 19 9" stroke="#8f5320" strokeWidth="2" fill="none" strokeLinecap="round" />
    <path
      d="M18 19Q17 16 14 16Q10 16 10 19Q10 21 14 22Q18 23 18 26Q18 28 14 28Q10 28 10 25M14 14V30"
      stroke="#3a2a0c"
      strokeWidth="2"
      fill="none"
    />
  </Emoji>
);

const Notepad = () => (
  <Emoji width="34" height="36" viewBox="0 0 34 36" role="img" aria-label="bloco espiral">
    <rect x="1" y="4" width="32" height="32" fill="#ececec" />
    <path d="M1 17H33M1 22H33M1 27H33M7 12V35M13 12V35M19 12V35M25 12V35" stroke="#e2e2e2" />
    <rect x="1" y="3" width="32" height="9" fill="#c9585c" />
    <path d="M4 1V6M8 1V6M12 1V6M16 1V6M20 1V6M24 1V6M28 1V6M31 1V6" stroke="#d8d8d8" strokeWidth="1.500" />
    <path d="M33 24Q30 32 18 36H33Z" fill="#b9b9b9" />
    <path d="M33 23Q31 30 28 29Q25 34 17 36" stroke="#777" fill="none" />
  </Emoji>
);

const LockIcon = () => (
  <svg width="15" height="19" viewBox="0 0 15 19" aria-hidden="true">
    <rect x="0" y="8" width="15" height="11" rx="3" fill="#f9d07f" />
    <path d="M3.500 9V5.500a4 4 0 0 1 8 0V9" stroke="#f9d07f" strokeWidth="2" fill="none" />
  </svg>
);

const App = () => {
  return (
    <Screen>
      <GlobalStyle />
      <Header>
        <StatusBar>
          <Clock>09:42</Clock>
          <StatusIcons>
            <SignalIcon />
            <WifiIcon />
            <Battery>
              <BatteryLevel>77</BatteryLevel>
            </Battery>
          </StatusIcons>
        </StatusBar>
        <ContactBar>
          <RoundButton aria-label="Voltar">
            <LineIcon $weight={4} width="26" height="38" viewBox="0 0 26 38">
              <path d="M19 4L4 19L19 34" />
            </LineIcon>
          </RoundButton>
          <GrowthLogo />
          <Contact>
            <ContactName>Gestor Leve</ContactName>
            <ContactKind>Conta comercial</ContactKind>
          </Contact>
          <RoundButton $wide aria-label="Ligar">
            <LineIcon $weight={8} width="39" height="39" viewBox="691 317 117 117">
              <path d="M699 336C704 323 717 318 723 327L736 348C741 356 735 360 728 364C724 369 730 378 740 388C750 398 757 404 762 400C767 391 773 386 780 390L798 401C805 407 804 417 798 425C789 433 771 433 755 423C727 407 706 384 698 357C696 349 696 342 699 336Z" />
            </LineIcon>
            <LineIcon width="18" height="12" viewBox="0 0 18 12">
              <path d="M2 2L9 9L16 2" />
            </LineIcon>
          </RoundButton>
        </ContactBar>
      </Header>

      <Chat>
        <ChatWallpaper />
        <DayLabel>Hoje</DayLabel>
        <Notice>
          <LockIcon /> As mensagens e ligações são protegidas com a criptografia de ponta a ponta. Somente as
          pessoas que fazem parte da conversa podem ler, ouvir e compartilhar esse conteúdo.{" "}
          <a href="#saiba-mais">Saiba mais</a>
        </Notice>

        <Bubble $sent>
          <BubbleText $sent>Acabei de abastecer 100 reais de gasolina, lança pra mim por favor</BubbleText>
          <Meta $sent>
            <time>09:40</time>
            <svg width="26" height="17" viewBox="0 0 26 17" fill="none" stroke="#8fae9f" strokeWidth="2">
              <path d="M1 9L6 15L17 1M11 13L13 15L25 1" />
            </svg>
          </Meta>
          <Tail $sent width="24" height="30" viewBox="0 0 24 30">
            <path d="M0 0H12Q12 20 23 29Q23 30 22 30Q12 30 6 25L0 30Z" />
          </Tail>
          <Reaction type="button" aria-label="Reações">
            <MoneyWings />
          </Reaction>
        </Bubble>

        <Bubble>
          <BubbleText>
            Feito! Lancei os <MoneyBag />
            R$ 100,00 de gasolina como pago hoje, <Notepad /> 12/08/2026.
          </BubbleText>
          <Meta>
            <time>09:41</time>
          </Meta>
          <Tail width="24" height="30" viewBox="0 0 24 30">
            <path d="M24 0H12Q12 20 1 29Q1 30 2 30Q12 30 18 25L24 30Z" />
          </Tail>
        </Bubble>
      </Chat>

      <Composer onSubmit={e => e.preventDefault()}>
        <IconButton type="button" aria-label="Anexar">
          <LineIcon width="36" height="38" viewBox="0 0 36 38">
            <path d="M18 2V36M2 19H34" />
          </LineIcon>
        </IconButton>
        <InputShell>
          <MessageInput type="text" aria-label="Mensagem" />
          <IconButton type="button" aria-label="Figurinhas">
            <LineIcon $weight={2} width="34" height="34" viewBox="0 0 34 34">
              <path d="M18 32H13Q1 32 1 20V13Q1 1 13 1H21Q33 1 33 13V18Q30 27 18 32ZM18 32V27Q18 19 26 19L33 18M21 31Q24 29 23 25Q27 26 31 22" />
            </LineIcon>
          </IconButton>
        </InputShell>
        <IconButton type="button" aria-label="Câmera">
          <LineIcon width="43" height="34" viewBox="0 0 43 34">
            <path d="M6 6H11Q13 6 14 4Q15 2 17 2H25Q27 2 28 4Q29 6 31 6H37Q41 6 41 10V28Q41 32 37 32H6Q2 32 2 28V10Q2 6 6 6Z" />
            <circle cx="21" cy="18" r="8.500" />
            <circle cx="33.500" cy="12" r="1" />
          </LineIcon>
        </IconButton>
        <IconButton type="button" aria-label="Gravar áudio">
          <LineIcon width="29" height="41" viewBox="0 0 29 41">
            <rect x="7.500" y="2" width="14" height="26" rx="7" />
            <path d="M2 20Q2 33 14.500 33Q27 33 27 20M14.500 33V39" />
          </LineIcon>
        </IconButton>
      </Composer>
    </Screen>
  );
};

export default App;
